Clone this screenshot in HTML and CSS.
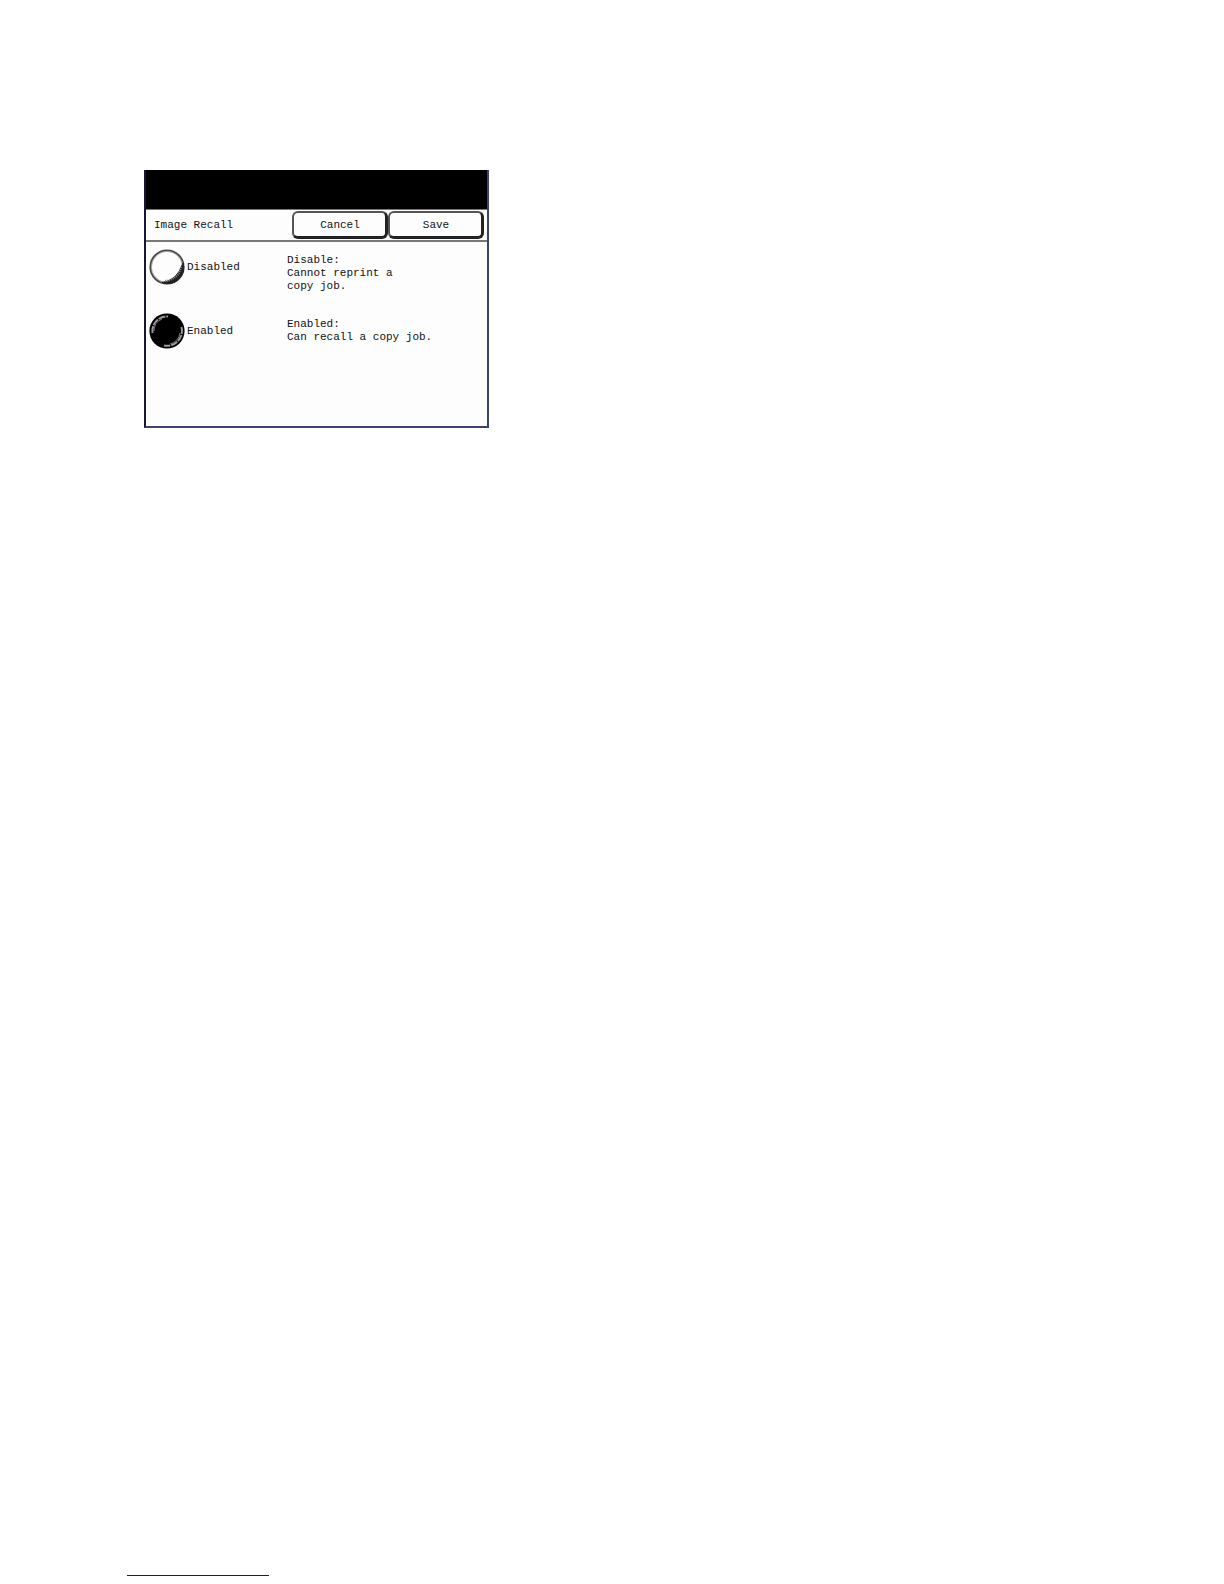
FILE: index.html
```html
<!DOCTYPE html>
<html lang="en">
<head>
<meta charset="utf-8">
<meta name="viewport" content="width=device-width, initial-scale=1">
<title>Image Recall</title>
<link rel="stylesheet" href="styles.css">
</head>
<body>
<main class="page">
  <form class="panel">
    <div class="panel-status"></div>
    <header class="panel-header">
      <h1 class="panel-title">Image Recall</h1>
      <div class="actions">
        <button class="button" type="button">Cancel</button>
        <button class="button" type="button">Save</button>
      </div>
    </header>
    <div class="options">
      <div class="option">
        <label class="choice">
          <span class="knob">
            <input class="knob-input" type="radio" name="recall" value="disabled">
            <svg class="knob-art" viewBox="0 0 36 36" aria-hidden="true">
              <circle cx="18" cy="18" r="16" fill="#fdfdfd" stroke="#aaa" stroke-width="2"/>
              <circle cx="18" cy="18" r="16.8" fill="none" stroke="#4a4a4a" stroke-width="1.6"/>
              <path d="M34 14A16 16 0 0 1 13 33.500Q28 32 34 14Z" fill="#222" stroke="#222"/>
              <path d="M32 18Q30 30 16 32" fill="none" stroke="#858585" stroke-width="2" stroke-dasharray="1 1"/>
            </svg>
          </span>
          <span>Disabled</span>
        </label>
        <p class="description">Disable:<br>Cannot reprint a<br>copy job.</p>
      </div>
      <div class="option">
        <label class="choice">
          <span class="knob">
            <input class="knob-input" type="radio" name="recall" value="enabled" checked>
            <svg class="knob-art" viewBox="0 0 36 36" aria-hidden="true">
              <circle cx="18" cy="18" r="17.6" fill="#000"/>
              <path d="M3.500 20A14.500 14.500 0 0 1 19 3.500" fill="none" stroke="#999" stroke-width="2" stroke-dasharray="7 1"/>
              <path d="M5 18A13 13 0 0 1 13 6" fill="none" stroke="#777"/>
              <path d="M32.500 14A15 15 0 0 1 15 32.500" fill="none" stroke="#999" stroke-width="2" stroke-dasharray="7 1"/>
              <path d="M31 20A13 13 0 0 1 21 31" fill="none" stroke="#777"/>
            </svg>
          </span>
          <span>Enabled</span>
        </label>
        <p class="description">Enabled:<br>Can recall a copy job.</p>
      </div>
    </div>
  </form>
  <hr class="footer-rule">
</main>
</body>
</html>
```
FILE: styles.css
```css
* {
  box-sizing: border-box;
}

body {
  margin: 0;
  background: #fff;
  color: #111;
  font-family: "Liberation Mono", monospace;
  font-size: 11px;
  line-height: 13px;
}

.page {
  display: flex;
  flex-direction: column;
  min-height: 100vh;
  padding: 170px 127px 8px;
}

.panel {
  width: 100%;
  max-width: 345px;
  margin-left: 17px;
  padding-bottom: 77px;
  border: 2px solid #3d4270;
  border-top: 0;
  border-left-color: #16163a;
  background: #fdfdfd;
}

.panel-status {
  height: 39px;
  background: #000;
}

.panel-header {
  display: flex;
  align-items: center;
  justify-content: space-between;
  padding: 1px 3px 1px 8px;
  border-top: 1px solid #777;
  border-bottom: 2px solid #777;
}

.panel-title {
  margin: 0;
  font-size: 11px;
  font-weight: 400;
}

.actions {
  display: flex;
}

.button {
  width: 96px;
  height: 28px;
  padding: 1px 0 0 1px;
  border: 2px solid #555;
  border-right: 3px solid #222;
  border-bottom: 3px solid #222;
  border-radius: 6px;
  background: #fdfdfd;
  color: inherit;
  font: inherit;
}

.options {
  display: grid;
  gap: 28px;
  padding: 7px 3px 0;
}

.option {
  display: grid;
  grid-template-columns: 138px 1fr;
  min-height: 36px;
}

.choice {
  display: flex;
  align-items: center;
  align-self: start;
  gap: 2px;
}

.knob {
  display: grid;
  width: 36px;
  height: 36px;
}

.knob-input,
.knob-art {
  grid-area: 1 / 1;
  width: 36px;
  height: 36px;
  margin: 0;
}

.knob-input {
  appearance: none;
  border-radius: 50%;
}

.knob-art {
  pointer-events: none;
}

.description {
  height: 36px;
  margin: 0;
  padding-top: 5px;
}

.footer-rule {
  width: 142px;
  height: 1px;
  margin: auto 0 0;
  border: 0;
  background: #191970;
}
```
